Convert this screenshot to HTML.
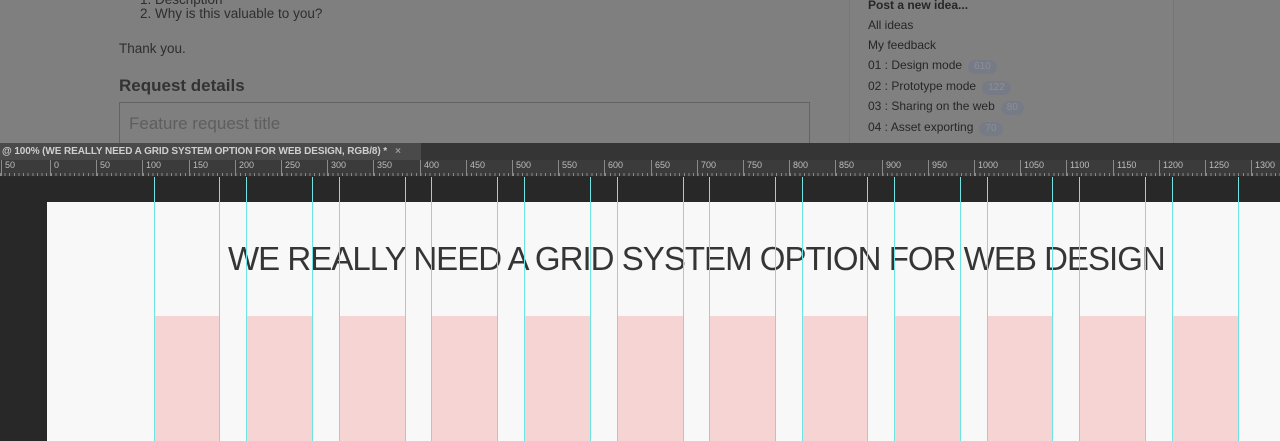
<!DOCTYPE html>
<html><head><meta charset="utf-8"><style>
*{margin:0;padding:0;box-sizing:border-box}
body{width:1280px;height:441px;overflow:hidden;position:relative;background:#282828;font-family:"Liberation Sans",sans-serif}
.top{position:absolute;left:0;top:0;width:1280px;height:143px;background:#7f7f7f;color:#2e2e2e;font-size:13.5px}
.top div{position:absolute;white-space:nowrap}
.side{position:absolute;left:849px;top:-2px;width:325px;height:150px;border-left:1px solid #767676;border-right:1px solid #767676;background:#808080}
.side div{position:absolute;left:18px;font-size:12px;color:#262626}
.b{display:inline-block;background:#777b85;color:#8b8f98;border-radius:8px;font-size:10px;padding:0 6px;margin-left:6px;line-height:14px}
.tabbar{position:absolute;left:0;top:143px;width:1280px;height:17px;background:#353535}
.tab{position:absolute;left:0;top:0;width:421px;height:17px;background:#4a4a4a;color:#cfcfcf;font-size:10px;font-weight:bold;line-height:17px;padding-left:2px;white-space:nowrap;letter-spacing:-0.1px}
.ruler{position:absolute;left:0;top:160px;width:1280px;height:17px;background:#3b3b3b;border-bottom:1px solid #2a2a2a;
background-image:repeating-linear-gradient(90deg,#8a8a8a 0 1px,transparent 1px 4.62px);background-size:100% 3px;background-repeat:no-repeat;background-position:0 13px}
.ruler span{position:absolute;top:0;height:16px;border-left:1px solid #8a8a8a;color:#bdbdbd;font-size:9px;padding-left:3px;line-height:11px}
.canvas{position:absolute;left:47px;top:202px;width:1233px;height:239px;background:#f8f8f8}
.pink{position:absolute;top:316px;height:125px;background:#f7d4d4}
.g{position:absolute;top:177px;height:264px;width:1px;background:#6fe2e2}
h1{position:absolute;left:228px;top:238px;font-size:33px;font-weight:normal;color:#353535;white-space:nowrap;letter-spacing:-0.97px;line-height:42px}
</style></head><body>
<div class="top">
<div style="left:140px;top:-8px">1. Description</div>
<div style="left:140px;top:6px">2. Why is this valuable to you?</div>
<div style="left:119px;top:41px">Thank you.</div>
<div style="left:119px;top:76px;font-size:17px;font-weight:bold;color:#333">Request details</div>
<div style="left:119px;top:102px;width:691px;height:50px;border:1px solid #636363;background:#7f7f7f"></div>
<div style="left:129px;top:114px;font-size:17px;color:#5e5e5e">Feature request title</div>
<div class="side">
<div style="top:0px;font-weight:bold">Post a new idea...</div>
<div style="top:20px">All ideas</div>
<div style="top:40px">My feedback</div>
<div style="top:60px">01 : Design mode<span class="b">610</span></div>
<div style="top:81px">02 : Prototype mode<span class="b">122</span></div>
<div style="top:101px">03 : Sharing on the web<span class="b">80</span></div>
<div style="top:122px">04 : Asset exporting<span class="b">70</span></div>
</div>
</div>
<div class="tabbar"><div class="tab">@ 100% (WE REALLY NEED A GRID SYSTEM OPTION FOR WEB DESIGN, RGB/8) * &nbsp;&nbsp;<span style="color:#999">×</span></div></div>
<div class="ruler">
<span style="left:1px">50</span><span style="left:50px">0</span><span style="left:96px">50</span><span style="left:142px">100</span><span style="left:189px">150</span><span style="left:235px">200</span><span style="left:281px">250</span><span style="left:327px">300</span><span style="left:373px">350</span><span style="left:420px">400</span><span style="left:466px">450</span><span style="left:512px">500</span><span style="left:558px">550</span><span style="left:604px">600</span><span style="left:651px">650</span><span style="left:697px">700</span><span style="left:743px">750</span><span style="left:789px">800</span><span style="left:835px">850</span><span style="left:882px">900</span><span style="left:928px">950</span><span style="left:974px">1000</span><span style="left:1020px">1050</span><span style="left:1066px">1100</span><span style="left:1113px">1150</span><span style="left:1159px">1200</span><span style="left:1205px">1250</span><span style="left:1251px">1300</span>
</div>
<div class="canvas"></div>
<div class="pink" style="left:154px;width:66px"></div>
<div class="pink" style="left:246px;width:66px"></div>
<div class="pink" style="left:339px;width:66px"></div>
<div class="pink" style="left:431px;width:66px"></div>
<div class="pink" style="left:524px;width:66px"></div>
<div class="pink" style="left:617px;width:66px"></div>
<div class="pink" style="left:709px;width:66px"></div>
<div class="pink" style="left:802px;width:65px"></div>
<div class="pink" style="left:894px;width:66px"></div>
<div class="pink" style="left:987px;width:65px"></div>
<div class="pink" style="left:1079px;width:66px"></div>
<div class="pink" style="left:1172px;width:66px"></div>
<h1>WE REALLY NEED A GRID SYSTEM OPTION FOR WEB DESIGN</h1>
<div class="g" style="left:154px"></div><div class="g" style="left:219px"></div>
<div class="g" style="left:246px"></div><div class="g" style="left:312px"></div>
<div class="g" style="left:339px"></div><div class="g" style="left:405px"></div>
<div class="g" style="left:431px"></div><div class="g" style="left:497px"></div>
<div class="g" style="left:524px"></div><div class="g" style="left:590px"></div>
<div class="g" style="left:617px"></div><div class="g" style="left:683px"></div>
<div class="g" style="left:709px"></div><div class="g" style="left:775px"></div>
<div class="g" style="left:802px"></div><div class="g" style="left:867px"></div>
<div class="g" style="left:894px"></div><div class="g" style="left:960px"></div>
<div class="g" style="left:987px"></div><div class="g" style="left:1052px"></div>
<div class="g" style="left:1079px"></div><div class="g" style="left:1145px"></div>
<div class="g" style="left:1172px"></div><div class="g" style="left:1238px"></div>
</body></html>
